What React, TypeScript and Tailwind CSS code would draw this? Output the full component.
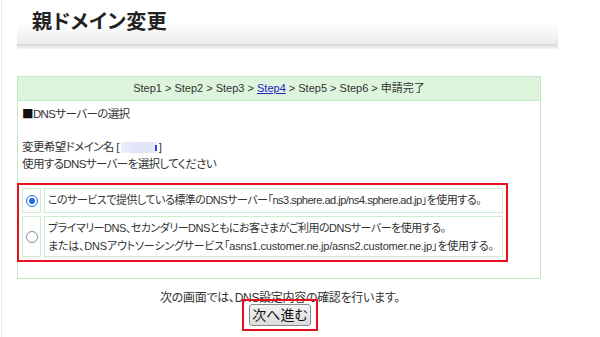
import React from 'react';

const jp = "font-['Liberation_Sans','Noto_Sans_CJK_JP',sans-serif] [font-feature-settings:'palt']";

export default function App() {
  return (
    <div className={`w-[600px] h-[337px] bg-white overflow-hidden text-[#333] ${jp}`}>
      <div className="ml-px h-full border-l border-[#ededed]">
        {/* Title band */}
        <div className="ml-[15px] w-[541px]">
          <div className="h-[44px] bg-gradient-to-b from-white via-white to-[#ececec] pl-[15px] pt-[8px]">
            <h1 className="text-[20px] leading-[28px] font-bold text-[#222] tracking-[0.5px]">親ドメイン変更</h1>
          </div>
          <div className="h-[5px] bg-gradient-to-b from-[#d6d6d6] to-[#f6f6f6]" />
        </div>

        {/* Main box */}
        <div className="ml-[15px] mt-[27px] w-[524px] h-[203px] border border-[#c4e8c4] flex flex-col">
          <div className="h-[24px] bg-[#ddf5dd] border-b border-[#c4e8c4] flex items-center justify-center text-[11px] text-[#333] whitespace-pre">
            <span>Step1 &gt; Step2 &gt; Step3 &gt; </span>
            <a href="#" className="text-[#2424c8] underline">Step4</a>
            <span> &gt; Step5 &gt; Step6 &gt; 申請完了</span>
          </div>
          <div className="pl-[4px] pt-[4px] text-[11.5px] leading-[16.5px] tracking-[-0.6px]">
            <p>
              <span className="font-['Noto_Sans_CJK_JP',sans-serif] text-[#111]">■</span>DNSサーバーの選択
            </p>
            <p className="h-[16.5px]" />
            <p className="flex items-center">
              変更希望ドメイン名 [
              <span className="inline-block w-[36px] h-[11px] mx-[2px] bg-gradient-to-r from-[#eceefa] via-[#dfe3f7] to-[#e6e8fb] relative">
                <span className="absolute right-0 top-[3px] w-[2px] h-[6px] bg-[#2a44d8]" />
              </span>
              ]
            </p>
            <p>使用するDNSサーバーを選択してください</p>
          </div>

          {/* Highlighted options */}
          <div className="-ml-px mt-[11px] w-[491px] border-[2.5px] border-[#e8101e] px-[3px] py-[3px]">
            <div className="flex flex-col gap-[3px] text-[11px] tracking-[-0.5px] whitespace-nowrap">
              <div className="flex gap-[3px] h-[25px]">
                <div className="w-[19px] border border-[#cdeccd] flex items-center justify-center">
                  <span className="w-[12px] h-[12px] rounded-full border border-[#1a6de0] flex items-center justify-center">
                    <span className="w-[6px] h-[6px] rounded-full bg-[#1a6de0]" />
                  </span>
                </div>
                <div className="flex-1 border border-[#cdeccd] flex items-center pl-[3px]">
                  このサービスで提供している標準のDNSサーバー「ns3.sphere.ad.jp/ns4.sphere.ad.jp」を使用する。
                </div>
              </div>
              <div className="flex gap-[3px] h-[41px]">
                <div className="w-[19px] border border-[#cdeccd] flex items-center justify-center">
                  <span className="w-[12px] h-[12px] rounded-full border border-[#8a8a9a] bg-white" />
                </div>
                <div className="flex-1 border border-[#cdeccd] flex flex-col justify-center pl-[3px] leading-[18px]">
                  <span>プライマリーDNS、セカンダリーDNSともにお客さまがご利用のDNSサーバーを使用する。</span>
                  <span className="tracking-[-0.2px]">または、DNSアウトソーシングサービス「asns1.customer.ne.jp/asns2.customer.ne.jp」を使用する。</span>
                </div>
              </div>
            </div>
          </div>
        </div>

        {/* Footer */}
        <div className="w-[556px] flex flex-col items-center pt-[11px]">
          <p className="text-[12px] leading-[16px] tracking-[-0.3px]">次の画面では、DNS設定内容の確認を行います。</p>
          <div className="-mt-[7px] border-[2.5px] border-[#e8101e] px-[5px] py-[2px] relative">
            <button className="h-[22px] px-[2px] rounded-[3px] border border-[#8a8a8a] bg-gradient-to-b from-[#f4f4f4] to-[#dcdcdc] text-[14px] leading-[18px] text-[#111]">
              次へ進む
            </button>
          </div>
        </div>
      </div>
    </div>
  );
}
